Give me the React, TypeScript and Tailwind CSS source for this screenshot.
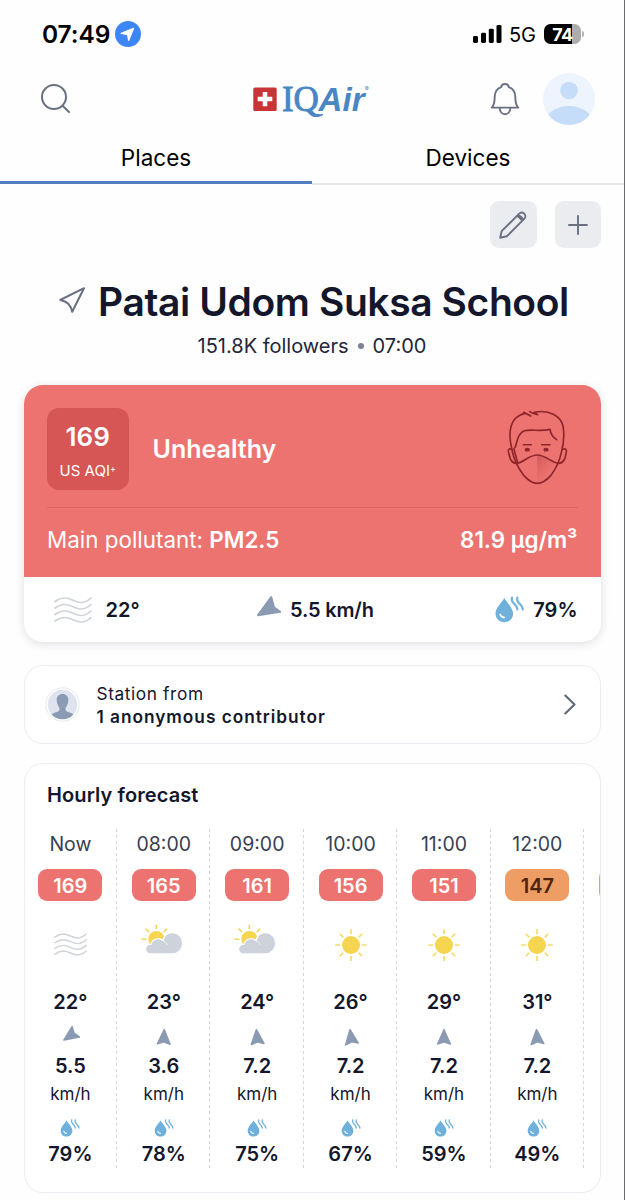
import React from "react";

type Weather = "haze" | "partly" | "sun";

interface Hour {
  time: string;
  aqi: number;
  weather: Weather;
  temp: number;
  wind: string;
  angle: number;
  humidity: number;
}

const hours: Hour[] = [
  { time: "Now", aqi: 169, weather: "haze", temp: 22, wind: "5.5", angle: -125, humidity: 79 },
  { time: "08:00", aqi: 165, weather: "partly", temp: 23, wind: "3.6", angle: 2, humidity: 78 },
  { time: "09:00", aqi: 161, weather: "partly", temp: 24, wind: "7.2", angle: -5, humidity: 75 },
  { time: "10:00", aqi: 156, weather: "sun", temp: 26, wind: "7.2", angle: -8, humidity: 67 },
  { time: "11:00", aqi: 151, weather: "sun", temp: 29, wind: "7.2", angle: 0, humidity: 59 },
  { time: "12:00", aqi: 147, weather: "sun", temp: 31, wind: "7.2", angle: -4, humidity: 49 },
];

function Haze({ className }: { className: string }) {
  return (
    <svg viewBox="0 0 38 26" className={className} fill="none" stroke="#cfd3da" strokeWidth="1.7" strokeLinecap="round">
      {[4.5, 11, 17.5, 24].map((y) => (
        <path key={y} d={`M1 ${y}C4.5 ${y - 2.5} 7.5 ${y - 3.5} 11 ${y - 3.5}C17 ${y - 3.5} 21 ${y + 1} 27 ${y + 1}C31 ${y + 1} 34.5 ${y - 1} 37 ${y - 3.5}`} />
      ))}
    </svg>
  );
}

function Sun() {
  return (
    <svg viewBox="-16 -16 32 32" className="h-8 w-8">
      <circle r="9" fill="#f6d550" />
      {[0, 45, 90, 135, 180, 225, 270, 315].map((a) => (
        <path key={a} d="M0-11.6V-15.2" transform={`rotate(${a})`} stroke="#f6db68" strokeWidth="1.7" strokeLinecap="round" />
      ))}
    </svg>
  );
}

function Partly() {
  return (
    <svg viewBox="0 0 42 32" className="h-8 w-[42px]">
      <circle cx="15.3" cy="15" r="8" fill="#f6d550" />
      <path d="M15.3 1.2V4.6M5 5L7.5 7.6M1 15.2H4.8M25.6 5L23.2 7.8" stroke="#f6d550" strokeWidth="1.6" strokeLinecap="round" />
      <path
        d="M10.5 29.9C2.6 29.9 3 20.5 10 20.2C11.5 14.5 18.5 13.3 22 16.5C23.5 10.5 28 8.7 31.3 8.7C37.5 8.7 41.7 13.5 41.7 19.2C41.7 25.3 37 29.9 31 29.9Z"
        fill="#cdd2db"
        stroke="#fefefe"
        strokeWidth="1.2"
      />
      <path d="M21 16C24 17.5 25.5 18.7 26.2 20.5" stroke="#fefefe" strokeWidth="0.8" fill="none" strokeLinecap="round" />
    </svg>
  );
}

function Drop({ className }: { className: string }) {
  return (
    <svg viewBox="0 0 29 27" className={className} fill="none" strokeLinecap="round">
      <path d="M9.3 1.7C10.3 5 18.1 11.5 18.1 17.6C18.1 22.8 14.2 26.3 9.3 26.3S.5 22.8.5 17.6C.5 11.5 8.3 5 9.3 1.7Z" fill="#6fb0dc" />
      <path d="M5.2 18.5C5.8 20.4 7.2 21.4 9 21.5" stroke="#fff" strokeWidth="1.8" />
      <path d="M17 1.5C15.8 4.5 17 5.8 18.8 7.4S22.4 10.6 22.4 13.6M22.4 1.5C21.2 4.5 22.4 5.8 24.2 7.4S27.8 10.6 27.8 13.6" stroke="#76b3dc" strokeWidth="2.1" />
    </svg>
  );
}

function WindArrow({ angle }: { angle: number }) {
  return (
    <svg viewBox="-10 -10 20 20" className="h-5 w-5 overflow-visible">
      <path d="M0-7.3L6.3 7L0 4.8L-6.3 7Z" transform={angle < -90 ? `translate(0 -1.2) rotate(${angle})` : `rotate(${angle})`} fill="#8b9ab3" stroke="#8b9ab3" strokeWidth="1.6" strokeLinejoin="round" />
    </svg>
  );
}

function MaskFace() {
  return (
    <svg viewBox="0 0 255 285" className="h-[95px] w-[85px]" fill="none" stroke="#8f262c" strokeWidth="5" strokeLinecap="round" strokeLinejoin="round">
      <defs>
        <linearGradient id="fold" x1="0" x2="1" y1="0" y2="1">
          <stop offset="0" stopColor="#b84048" stopOpacity=".55" />
          <stop offset=".7" stopColor="#d9605f" stopOpacity="0" />
        </linearGradient>
      </defs>
      <path d="M127 165C146 168 158 178 185 188L160 235L127 249Z" fill="url(#fold)" stroke="none" />
      <path d="M51 150C41 110 43 78 59 58C69 46 80 42 92 40L86 37L107 48M104 35C112 41 120 43 128 44L118 37C162 27 197 49 204 78C209 104 207 128 199 158C193 186 180 210 167 227C151 245 140 250 127 250C114 250 103 245 87 227C74 210 58 187 51 150" />
      <path d="M50 148C41 144 38 150 42 162C45 180 51 190 64 190M204 148C213 144 216 150 213 162C210 180 204 190 191 190" />
      <path d="M60 142C67 130 64 105 86 93C108 86 134 96 165 88C167 103 172 110 185 119" />
      <path d="M64 190C85 189 101 165 127 165C153 165 169 189 191 190M57 146C59 160 64 172 68 188" />
      <path d="M85 134H109M140 134H165" strokeWidth="4.5" />
      <ellipse cx="97" cy="149" rx="8" ry="5.5" fill="#8f262c" stroke="none" />
      <ellipse cx="153" cy="149" rx="8" ry="5.5" fill="#8f262c" stroke="none" />
    </svg>
  );
}

function StatusBar() {
  return (
    <div className="flex h-[68px] items-center justify-between pr-[40px] pl-[42px]">
      <div className="flex items-center gap-[5px]">
        <span className="text-[24.5px] font-semibold tracking-[-0.1px] text-black">07:49</span>
        <svg viewBox="0 0 26 26" className="h-[26px] w-[26px]">
          <circle cx="13" cy="13" r="13" fill="#3c86f7" />
          <path d="M18.6 7.2L13.6 19.5L12.6 13.7L6.2 12.4Z" fill="#fff" stroke="#fff" strokeWidth="1.2" strokeLinejoin="round" />
        </svg>
      </div>
      <div className="flex items-center">
        <svg viewBox="0 0 29 18" className="h-[18px] w-[29px]">
          <rect x="0" y="11" width="5" height="7" rx="1.4" />
          <rect x="8" y="7.7" width="5" height="10.3" rx="1.4" />
          <rect x="15.8" y="3.8" width="5" height="14.2" rx="1.4" />
          <rect x="23.5" y="0" width="5" height="18" rx="1.4" />
        </svg>
        <span className="ml-[7px] pt-px text-[20px] text-black">5G</span>
        <div className="ml-[8px] flex h-5 w-[37px] items-center justify-center rounded-[6.5px] bg-[linear-gradient(90deg,#000_75%,#adadad_75%)]">
          <span className="text-[18px] font-bold tracking-[-0.5px] text-white">74</span>
        </div>
        <div className="ml-[1px] h-[6px] w-[2px] rounded-r-full bg-[#b5b5b5]" />
      </div>
    </div>
  );
}

function Logo() {
  return (
    <div className="flex h-[40px] items-center">
      <svg viewBox="0 0 24 24" className="h-6 w-6">
        <rect x="0.3" y="0.5" width="23.4" height="23.4" rx="1.5" fill="#c93437" />
        <path d="M9.7 5H14.3V9.7H19.3V14.3H14.3V19.2H9.7V14.3H4.7V9.7H9.7Z" fill="#fff" />
      </svg>
      <div className="relative ml-[5px] flex items-center leading-none text-[#4a86c4]">
        <span className="font-['Liberation_Serif',serif] text-[35px] tracking-[-0.2px] [-webkit-text-stroke:0.9px_#4a86c4]">IQ</span>
        <svg viewBox="0 0 20 10" className="absolute top-[26px] left-[22px] h-[10px] w-5">
          <path d="M1 1C6 3 10 8 19 6.5C14 10 7 9 1 1Z" fill="#4a86c4" stroke="#4a86c4" strokeWidth="1" />
        </svg>
        <span className="font-['Liberation_Sans',sans-serif] text-[33px] font-bold tracking-[0.1px] italic">Air</span>
        <span className="-mt-[20px] text-[6px]">®</span>
      </div>
    </div>
  );
}

function Header() {
  return (
    <div className="flex h-[62px] items-center pr-[29px] pl-[41px]">
      <svg viewBox="0 0 30 30" className="h-[30px] w-[30px]" fill="none" stroke="#6a7082" strokeWidth="2" strokeLinecap="round">
        <circle cx="13" cy="13" r="12" />
        <path d="M21.8 22L28 28" />
      </svg>
      <div className="ml-[182px]">
        <Logo />
      </div>
      <svg viewBox="0 0 30 34" className="ml-auto h-[34px] w-[30px]" fill="none" stroke="#6a7082" strokeWidth="1.9" strokeLinejoin="round" strokeLinecap="round">
        <path d="M15 2C17 2 18.6 3.4 18.8 5.2C23 6.7 25.3 10.5 25.3 15C25.3 20 26 23.5 28.3 25.6H1.7C4 23.5 4.7 20 4.7 15C4.7 10.5 7 6.7 11.2 5.2C11.4 3.4 13 2 15 2Z" />
        <path d="M9.6 26C9.8 29.5 12 32.2 15 32.2S20.2 29.5 20.4 26" />
      </svg>
      <svg viewBox="0 0 52 52" className="ml-[23px] h-[52px] w-[52px]">
        <clipPath id="user">
          <circle cx="26" cy="26" r="26" />
        </clipPath>
        <circle cx="26" cy="26" r="26" fill="#edf4fd" />
        <circle cx="26" cy="17.5" r="8.8" fill="#c5ddf9" />
        <ellipse cx="26" cy="52" rx="25" ry="19" fill="#c5ddf9" clipPath="url(#user)" />
      </svg>
    </div>
  );
}

function Tabs() {
  return (
    <div className="grid h-[55px] grid-cols-[312px_1fr] text-center text-[22.5px] leading-[55px] text-black">
      <div className="relative">
        Places
        <div className="absolute inset-x-0 bottom-[1px] h-[3px] bg-[#4f7fc0]" />
      </div>
      <div className="relative">
        Devices
        <div className="absolute inset-x-0 bottom-0 h-[2px] bg-[#e6e8ec]" />
      </div>
    </div>
  );
}

function AqiCard() {
  return (
    <div className="mx-[23.5px] mt-[27px] h-[257px] w-[577.5px] overflow-hidden rounded-[19px] bg-white shadow-[0_2px_10px_rgba(30,35,60,0.14)]">
      <div className="h-[192px] bg-[#ec736f] px-[23.5px] pt-[23px] text-white">
        <div className="flex h-[100px] items-start border-b border-[#dc6462]">
          <div className="flex h-[81.5px] w-[81.5px] flex-col items-center rounded-xl bg-[#d65655] pt-[14px]">
            <span className="text-[26px] leading-[30px] font-semibold">169</span>
            <span className="mt-[9px] text-[15px] leading-5">
              US AQI<sup className="text-[9px]">+</sup>
            </span>
          </div>
          <span className="ml-6 text-[25px] leading-[82px] font-semibold">Unhealthy</span>
          <div className="-mt-2 -mr-[2px] ml-auto">
            <MaskFace />
          </div>
        </div>
        <div className="flex items-center justify-between text-[22.4px] leading-[64px]">
          <span>
            Main pollutant: <b className="font-semibold">PM2.5</b>
          </span>
          <span className="font-semibold">81.9 µg/m³</span>
        </div>
      </div>
      <div className="flex h-[65px] items-center justify-between pr-[23.5px] pl-[30px] text-[20px] font-semibold text-[#14172b]">
        <div className="flex items-center gap-[14px]">
          <Haze className="h-[26px] w-[38px]" />
          <span>22°</span>
        </div>
        <div className="-ml-[5px] flex items-center gap-[8px]">
          <svg viewBox="0 0 26 22" className="-mt-[7px] h-[22px] w-[26px]">
            <path d="M15.2 2L18 12.3L24.2 16.8L2 20.2Z" fill="#8b9ab3" stroke="#8b9ab3" strokeWidth="2" strokeLinejoin="round" />
          </svg>
          <span className="tracking-[-0.15px]">5.5 km/h</span>
        </div>
        <div className="flex items-center gap-[9px]">
          <Drop className="h-[27px] w-[29px]" />
          <span>79%</span>
        </div>
      </div>
    </div>
  );
}

function StationCard() {
  return (
    <div className="mx-[23.5px] mt-[23px] flex h-[79px] w-[577.5px] items-center rounded-[19px] border-[1.5px] border-[#ebecf1] bg-white pr-[24px] pl-[20px]">
      <svg viewBox="0 0 35 35" className="h-[35px] w-[35px]">
        <clipPath id="contributor">
          <circle cx="17.5" cy="17.5" r="14.7" />
        </clipPath>
        <circle cx="17.5" cy="17.5" r="16.7" fill="#fff" stroke="#e5e8ee" />
        <circle cx="17.5" cy="17.5" r="14.7" fill="#dde4ee" />
        <path
          clipPath="url(#contributor)"
          d="M17.5 7C21.5 7 23.6 9.8 23.3 13.5C23.1 17.5 21.6 19.3 20.6 20.8C20.2 23.5 21 24.3 24 25.2C27 26 28.5 27 29.2 28.5V34H5.8V28.5C6.5 27 8 26 11 25.2C14 24.3 14.8 23.5 14.4 20.8C13.4 19.3 11.9 17.5 11.7 13.5C11.4 9.8 13.5 7 17.5 7Z"
          fill="#8b9bb4"
        />
      </svg>
      <div className="ml-[17px] flex flex-col pt-px text-[17.3px] leading-[23px] text-[#14172b]">
        <span className="tracking-[0.6px]">Station from</span>
        <span className="font-semibold tracking-[0.96px]">1 anonymous contributor</span>
      </div>
      <svg viewBox="0 0 12 21" className="ml-auto h-[21px] w-3" fill="none" stroke="#5f6678" strokeWidth="2.1" strokeLinecap="round" strokeLinejoin="round">
        <path d="M1.3 1.5L10.5 10.5L1.3 19.5" />
      </svg>
    </div>
  );
}

function HourColumn({ hour }: { hour: Hour }) {
  return (
    <div className="flex w-[93.4px] shrink-0 flex-col items-center text-[20px] font-semibold text-[#14172b]">
      <span className="h-[29px] text-[19.5px] leading-[30px] font-normal text-[#3a3f52]">{hour.time}</span>
      <span
        className={
          hour.aqi > 150
            ? "mt-[11px] h-8 w-16 rounded-[9px] bg-[#ec736f] text-center leading-[34px] text-white"
            : "mt-[11px] h-8 w-16 rounded-[9px] bg-[#ee9e65] text-center leading-[34px] text-[#4d250f]"
        }
      >
        {hour.aqi}
      </span>
      <div className="mt-5 flex h-12 items-center">
        {hour.weather === "haze" && <Haze className="h-[23px] w-[33px]" />}
        {hour.weather === "partly" && (
          <div className="-mt-[9px] -ml-[4px]">
            <Partly />
          </div>
        )}
        {hour.weather === "sun" && <Sun />}
      </div>
      <span className="mt-5 h-[25px] leading-[26px]">{hour.temp}°</span>
      <div className="mt-[10px] flex h-[26px] items-center">
        <WindArrow angle={hour.angle} />
      </div>
      <span className="mt-1 h-6 leading-[25px]">{hour.wind}</span>
      <span className="mt-1.5 h-5 text-[17px] leading-[21px] font-normal">km/h</span>
      <div className="mt-3 flex h-6 items-center">
        <Drop className="h-[18px] w-[20px]" />
      </div>
      <span className="mt-0.5 h-6 leading-[25px]">{hour.humidity}%</span>
    </div>
  );
}

function HourlyForecast() {
  return (
    <div className="mx-[23.5px] mt-[18.5px] h-[430.5px] w-[577.5px] overflow-hidden rounded-[19px] border-[1.5px] border-[#ebecf1] bg-white pt-[16px]">
      <h2 className="pl-[22.5px] text-[20px] leading-[30px] font-semibold tracking-[0.1px] text-[#14172b]">Hourly forecast</h2>
      <div className="mt-[19px] -ml-[0.8px] flex h-[340px]">
        {hours.map((hour) => (
          <React.Fragment key={hour.time}>
            <HourColumn hour={hour} />
            <div className="-ml-px w-px shrink-0 bg-[repeating-linear-gradient(180deg,#d3d4d8_0_3px,transparent_3px_6px)]" />
          </React.Fragment>
        ))}
        <div className="mt-[40px] ml-[14.5px] h-8 w-16 shrink-0 rounded-[9px] bg-[#ee9e65]" />
      </div>
    </div>
  );
}

export default function App() {
  return (
    <div className="h-[1200px] w-[625px] overflow-hidden border-r border-[#6b6b6e] bg-[#fefefe] font-['Inter',sans-serif]">
      <StatusBar />
      <Header />
      <Tabs />
      <div className="mt-[16px] flex justify-end gap-[18px] pr-[23px]">
        <button className="flex h-[47px] w-[46.5px] items-center justify-center rounded-[9px] bg-[#ebecf0]">
          <svg viewBox="0 0 28 28" className="h-7 w-7" fill="none" stroke="#6a7082" strokeWidth="1.9" strokeLinejoin="round" strokeLinecap="round">
            <path d="M1.2 26.8L2.6 20.2L20 2.8C21.5 1.3 23.7 1.2 25.2 2.6C26.7 4.1 26.7 6.4 25.2 7.9L7.8 25.3L1.2 26.8ZM18.3 4.6L23.4 9.7M18.4 4.6C20.6 3.7 24.6 7.3 23.5 9.6" />
          </svg>
        </button>
        <button className="flex h-[47px] w-[46.5px] items-center justify-center rounded-[9px] bg-[#ebecf0]">
          <svg viewBox="0 0 20 20" className="h-5 w-5" fill="none" stroke="#6a7082" strokeWidth="1.9" strokeLinecap="round">
            <path d="M10 1V19M1 10H19" />
          </svg>
        </button>
      </div>
      <div className="mt-[30px] flex h-12 items-center pl-[58px]">
        <svg viewBox="0 0 28 28" className="-mt-[4px] h-7 w-7 shrink-0" fill="none" stroke="#6a7082" strokeWidth="2" strokeLinejoin="round">
          <path d="M26 2.2L14.2 25.8C12.5 18.5 9.5 15.5 2.2 14Z" />
        </svg>
        <h1 className="ml-[12px] text-[39px] leading-[48px] font-semibold tracking-[-0.4px] whitespace-nowrap text-[#14172b]">Patai Udom Suksa School</h1>
      </div>
      <div className="mt-2 flex h-6 items-center justify-center text-[20px] text-[#23263a]">
        <span>151.8K followers</span>
        <span className="mx-[9px] h-[6px] w-[6px] rounded-full bg-[#7b8192]" />
        <span>07:00</span>
      </div>
      <AqiCard />
      <StationCard />
      <HourlyForecast />
    </div>
  );
}
